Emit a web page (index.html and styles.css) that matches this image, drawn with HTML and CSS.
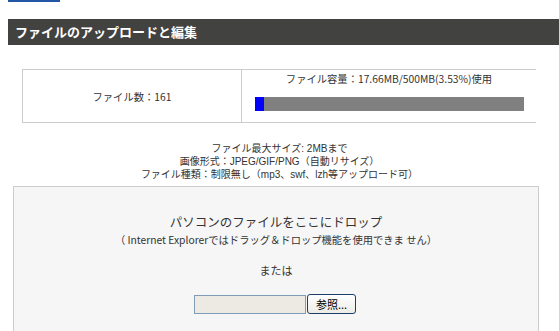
FILE: index.html
```html
<!DOCTYPE html>
<html lang="ja">
<head>
<meta charset="UTF-8">
<title>ファイルのアップロードと編集</title>
<link rel="stylesheet" href="styles.css">
</head>
<body>
<div class="tab"></div>
<h2 class="title">ファイルのアップロードと編集</h2>

<table class="usage">
  <tr>
    <td class="count">ファイル数：161</td>
    <td class="size">
      <div>ファイル容量：17.66MB/500MB(3.53%)使用</div>
      <div class="bar"><div class="fill" style="width: 3.53%"></div></div>
    </td>
  </tr>
</table>

<div class="info">
  <div>ファイル最大サイズ: 2MBまで</div>
  <div>画像形式：JPEG/GIF/PNG（自動リサイズ）</div>
  <div>ファイル種類：制限無し（mp3、swf、lzh等アップロード可）</div>
</div>

<div class="drop">
  <div class="drop-main">パソコンのファイルをここにドロップ</div>
  <div class="drop-note">（ Internet Explorerではドラッグ＆ドロップ機能を使用できま せん）</div>
  <div class="or">または</div>
  <div class="picker">
    <span class="path"></span><button class="browse">参照...</button>
  </div>
</div>
</body>
</html>
```

FILE: styles.css
```css
* {
  box-sizing: border-box;
}

body {
  margin: 0 0 0 8px;
  font: 11px "Noto Sans CJK JP", "Liberation Sans", sans-serif;
  color: #333;
  background: #fff;
  overflow: hidden;
}

.tab {
  width: 52px;
  height: 2px;
  background: #2456a8;
}

.title {
  margin: 17px 0 0;
  height: 26px;
  padding: 0 0 0 7px;
  background: #424241;
  color: #fff;
  font-size: 13px;
  font-weight: bold;
  line-height: 26px;
}

.usage {
  margin: 24px 0 0 14px;
  width: 514px;
  border-collapse: collapse;
  font-size: 10.3px;
}

.usage td {
  height: 53px;
  border-top: 1px solid #ccc;
  border-bottom: 1px solid #ccc;
  text-align: center;
  padding: 0;
}

.count {
  width: 219px;
  border-left: 1px solid #ccc;
  border-right: 1px solid #ccc;
}

.size {
  vertical-align: top;
}

.size div:first-child {
  margin-top: 2px;
  line-height: 14px;
}

.bar {
  margin: 11px 0 0 13px;
  width: 269px;
  height: 14px;
  background: #808080;
}

.fill {
  height: 100%;
  background: #0000ff;
}

.info {
  margin: 19px 0 0;
  width: 543px;
  text-align: center;
  font: 10px/13px "Liberation Sans", "Noto Sans CJK JP", sans-serif;
}

.drop {
  margin: 5px 0 0 5px;
  width: 526px;
  height: 160px;
  border: 1px solid #ccc;
  border-bottom: 0;
  background: #f6f6f6;
  text-align: center;
}

.drop-main {
  margin-top: 26px;
  font-size: 12.5px;
  line-height: 18px;
}

.drop-note {
  margin-top: 2px;
  font-size: 10.3px;
  line-height: 14px;
}

.or {
  margin-top: 16px;
  line-height: 14px;
}

.picker {
  display: flex;
  justify-content: center;
  align-items: center;
  gap: 1px;
  margin: 17px 2px 0 0;
}

.path {
  width: 112px;
  height: 19px;
  border: 1px solid #7f9db9;
  background: #eceae3;
}

.browse {
  width: 49px;
  height: 20px;
  padding: 0;
  border: 1px solid #1c3f6a;
  border-radius: 3px;
  background: linear-gradient(#fff, #ecebe6);
  color: #000;
  font: 11px "Noto Sans CJK JP", sans-serif;
}
```
